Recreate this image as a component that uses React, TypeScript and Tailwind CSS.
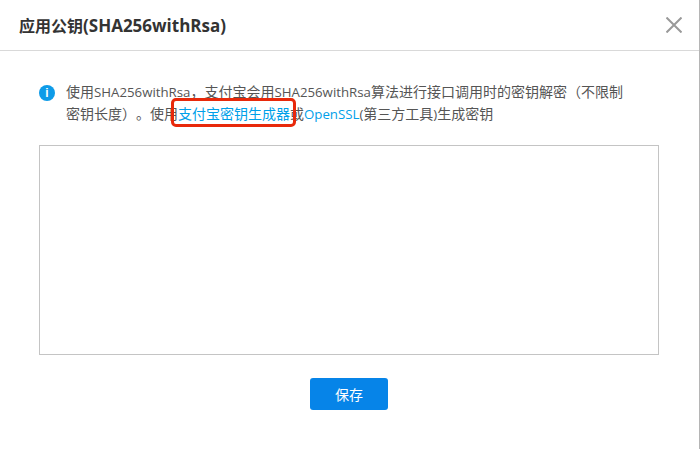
function L({ children }: { children: string }) {
  return <span className="font-['Open_Sans'] text-[13.25px] leading-none">{children}</span>;
}

export default function App() {
  return (
    <div className="w-[700px] h-[449px] bg-white border-r border-[#b5b5b5] font-['Noto_Sans_CJK_SC','Open_Sans',sans-serif] overflow-hidden">
      <header className="h-[51px] border-b border-[#d9d9d9] flex items-center justify-between pl-[19px] pr-[17px]">
        <h1 className="text-[16px] leading-[24px] font-bold text-[#333]">
          应用公钥<span className="font-['Open_Sans'] text-[17px] leading-none">(SHA256withRsa)</span>
        </h1>
        <svg width="16" height="16" viewBox="0 0 16 16" className="text-[#999]" fill="none" stroke="currentColor" strokeWidth="2" aria-label="关闭">
          <path d="M0.5 0.5 L15.5 15.5 M15.5 0.5 L0.5 15.5" />
        </svg>
      </header>
      <main className="pl-[39px] pr-[40px] pt-[29px]">
        <div className="flex items-start">
          <span className="mt-[5px] w-[16px] h-[16px] shrink-0 rounded-full bg-[#0e9be8] text-white text-[12px] leading-[16px] font-bold text-center font-['Liberation_Sans']">i</span>
          <p className="ml-[11px] w-[564px] text-[14px] leading-[22px] text-[#555] [text-spacing-trim:space-all]">
            使用<L>SHA256withRsa</L>，支付宝会用<L>SHA256withRsa</L>算法进行接口调用时的密钥解密（不限制密钥长度）。使用
            <span className="relative text-[#00a0e9]">
              支付宝密钥生成器
              <span className="absolute left-[-7px] right-[-6px] top-[-5px] bottom-[-4px] border-[3px] border-[#e8290b] rounded-[5px]" />
            </span>
            或<span className="text-[#00a0e9]"><L>OpenSSL</L></span><L>(</L>第三方工具<L>)</L>生成密钥
          </p>
        </div>
        <textarea className="block mt-[21px] w-[620px] h-[210px] border border-[#c4c4c4] bg-white resize-none outline-none" />
        <div className="mt-[23px] flex justify-center">
          <button className="w-[78px] h-[32px] rounded-[3px] bg-[#0684e8] text-white text-[14px]">保存</button>
        </div>
      </main>
    </div>
  );
}
